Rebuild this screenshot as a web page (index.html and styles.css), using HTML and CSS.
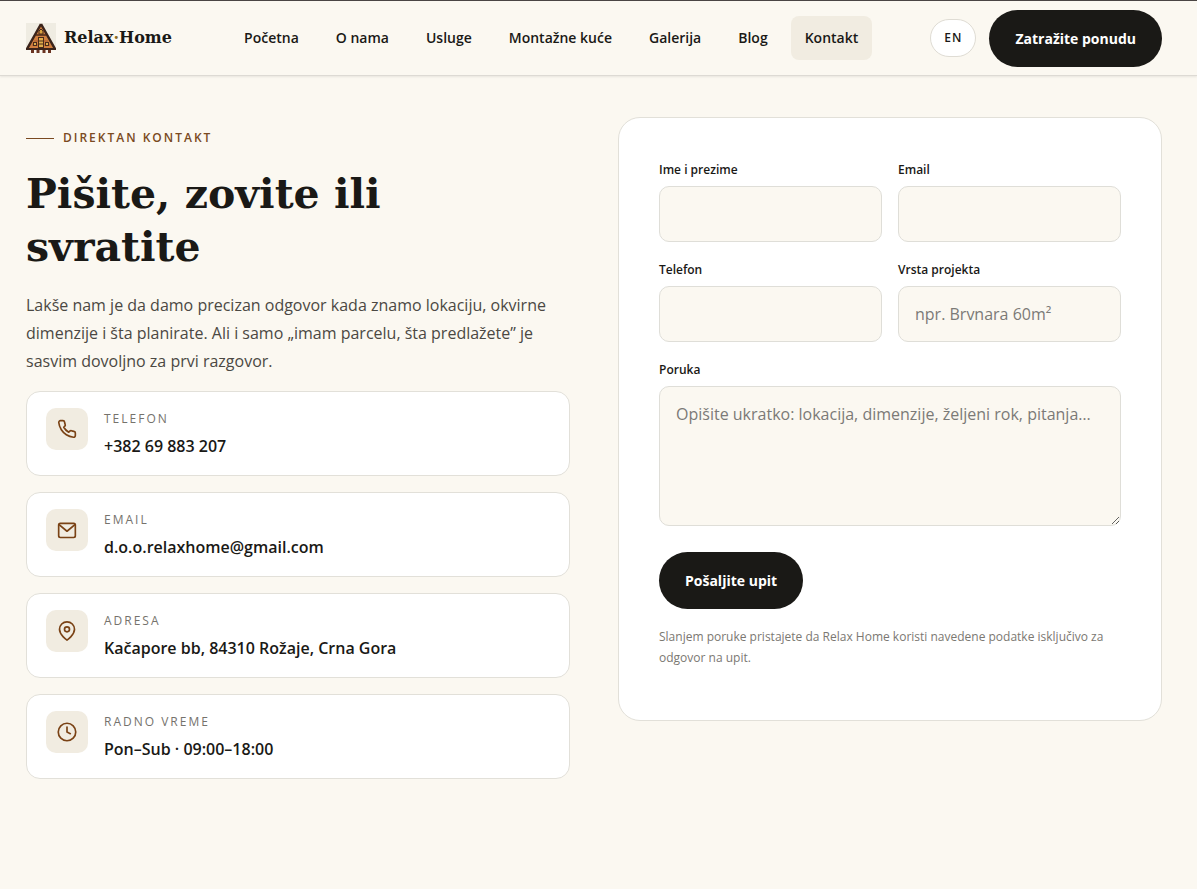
FILE: index.html
```html
<!DOCTYPE html>
<html lang="sr-Latn">
<head>
  <meta charset="UTF-8">
  <meta name="viewport" content="width=device-width, initial-scale=1">
  <title>Kontakt - Relax Home</title>
  <link rel="stylesheet" href="styles.css">
</head>
<body>
  <header class="site-header">
    <a class="brand" href="#">
      <svg class="brand-logo" viewBox="0 0 30 30" aria-hidden="true">
        <rect width="30" height="27" fill="#efece2"/>
        <path d="M15 1 L29 26 H1 Z" fill="#cf7f40"/>
        <path d="M6 22h18M8 18h14" stroke="#a85c2c" stroke-width="1"/>
        <path d="M15 1 L1 26 M15 1 L29 26" stroke="#3b241b" stroke-width="2.500"/>
        <path d="M10 12h10" stroke="#4a2a1a" stroke-width="1.500"/>
        <path d="M13 11V8l2-2 2 2v3z" fill="#d9a441" stroke="#4a2a1a"/>
        <rect x="12.500" y="14.500" width="5" height="10" fill="#e0ae4c" stroke="#4a2a1a"/>
        <path d="M12 18h6M12 21h6" stroke="#4a2a1a"/>
        <rect x="7.500" y="19.500" width="3" height="3" fill="#e0ae4c" stroke="#4a2a1a"/>
        <rect x="19.500" y="19.500" width="3" height="3" fill="#e0ae4c" stroke="#4a2a1a"/>
        <rect y="25" width="30" height="2" fill="#3b241b"/>
        <path d="M6.500 27v3M12 27v3M18 27v3M23.500 27v3" stroke="#6b3422" stroke-width="3"/>
      </svg>
      <span>Relax<span class="brand-dot">·</span>Home</span>
    </a>

    <nav class="nav">
      <a href="#">Početna</a>
      <a href="#">O nama</a>
      <a href="#">Usluge</a>
      <a href="#">Montažne kuće</a>
      <a href="#">Galerija</a>
      <a href="#">Blog</a>
      <a class="active" href="#">Kontakt</a>
    </nav>

    <div class="header-actions">
      <a class="lang" href="#">EN</a>
      <a class="btn" href="#">Zatražite ponudu</a>
    </div>
  </header>

  <main class="contact">
    <section class="contact-info">
      <p class="eyebrow">Direktan kontakt</p>
      <h1>Pišite, zovite ili svratite</h1>
      <p class="lead">Lakše nam je da damo precizan odgovor kada znamo lokaciju, okvirne dimenzije i šta planirate. Ali i samo „imam parcelu, šta predlažete” je sasvim dovoljno za prvi razgovor.</p>

      <div class="cards">
        <div class="card">
          <div class="card-icon">
            <svg viewBox="0 0 24 24"><path d="M22 16.920v3a2 2 0 0 1-2.180 2 19.790 19.790 0 0 1-8.630-3.070 19.500 19.500 0 0 1-6-6 19.790 19.790 0 0 1-3.070-8.670A2 2 0 0 1 4.110 2h3a2 2 0 0 1 2 1.720c.127.960.361 1.903.700 2.810a2 2 0 0 1-.450 2.110L8.090 9.910a16 16 0 0 0 6 6l1.270-1.270a2 2 0 0 1 2.110-.450c.907.339 1.850.573 2.810.700A2 2 0 0 1 22 16.920z"/></svg>
          </div>
          <div>
            <div class="card-label">Telefon</div>
            <a class="card-value" href="tel:+38269883207">+382 69 883 207</a>
          </div>
        </div>

        <div class="card">
          <div class="card-icon">
            <svg viewBox="0 0 24 24"><rect x="2" y="4" width="20" height="17" rx="2"/><path d="M2.500 5.500 12 13.500l9.500-8"/></svg>
          </div>
          <div>
            <div class="card-label">Email</div>
            <a class="card-value" href="mailto:d.o.o.relaxhome@gmail.com">d.o.o.relaxhome@gmail.com</a>
          </div>
        </div>

        <div class="card">
          <div class="card-icon">
            <svg viewBox="0 0 24 24"><path d="M21 10c0 7-9 13-9 13s-9-6-9-13a9 9 0 0 1 18 0z"/><circle cx="12" cy="10" r="3"/></svg>
          </div>
          <div>
            <div class="card-label">Adresa</div>
            <div class="card-value">Kačapore bb, 84310 Rožaje, Crna Gora</div>
          </div>
        </div>

        <div class="card">
          <div class="card-icon">
            <svg viewBox="0 0 24 24"><circle cx="12" cy="12" r="10.500"/><path d="M12 6v6l4 2"/></svg>
          </div>
          <div>
            <div class="card-label">Radno vreme</div>
            <div class="card-value">Pon–Sub · 09:00–18:00</div>
          </div>
        </div>
      </div>
    </section>

    <form class="contact-form">
      <div class="form-row">
        <div class="field">
          <label for="name">Ime i prezime</label>
          <input type="text" id="name" name="name">
        </div>
        <div class="field">
          <label for="email">Email</label>
          <input type="email" id="email" name="email">
        </div>
      </div>
      <div class="form-row">
        <div class="field">
          <label for="phone">Telefon</label>
          <input type="tel" id="phone" name="phone">
        </div>
        <div class="field">
          <label for="project">Vrsta projekta</label>
          <input type="text" id="project" name="project" placeholder="npr. Brvnara 60m²">
        </div>
      </div>
      <div class="field">
        <label for="message">Poruka</label>
        <textarea id="message" name="message" placeholder="Opišite ukratko: lokacija, dimenzije, željeni rok, pitanja…"></textarea>
      </div>
      <button class="btn" type="submit">Pošaljite upit</button>
      <p class="form-note">Slanjem poruke pristajete da Relax Home koristi navedene podatke isključivo za odgovor na upit.</p>
    </form>
  </main>
</body>
</html>
```
FILE: styles.css
```css
* {
  box-sizing: border-box;
}

body {
  margin: 0;
  font-family: 'Segoe UI', 'Open Sans', sans-serif;
  font-size: 16px;
  line-height: 28px;
  color: #1a1916;
  background: #fbf8f1;
}

a {
  color: inherit;
  text-decoration: none;
}

/* header */
.site-header {
  display: flex;
  align-items: center;
  justify-content: space-between;
  height: 76px;
  padding: 0 35px 0 26px;
  border-top: 1px solid #4a4544;
  border-bottom: 1px solid #dddad4;
  box-shadow: 0 1px 2px rgba(0, 0, 0, 0.08);
}

.brand {
  display: flex;
  align-items: center;
  gap: 8px;
  font-family: Georgia, 'DejaVu Serif', serif;
  font-size: 16px;
  font-weight: 700;
}

.brand-logo {
  width: 30px;
  height: 30px;
}

.brand-dot {
  color: #8a6a1c;
}

.nav {
  display: flex;
  gap: 9px;
}

.nav a {
  padding: 8px 14px;
  border-radius: 8px;
  font-size: 14px;
  font-weight: 600;
  white-space: nowrap;
}

.nav .active {
  background: #f1ece1;
}

.header-actions {
  display: flex;
  align-items: center;
  gap: 13px;
}

.lang {
  padding: 4px 13px;
  border: 1px solid #dfdcd4;
  border-radius: 999px;
  background: #fff;
  font-size: 12px;
  font-weight: 600;
  letter-spacing: 1px;
}

.btn {
  padding: 14px 26px;
  border: 0;
  border-radius: 999px;
  background: #1a1916;
  color: #fff;
  font-family: inherit;
  font-size: 14px;
  font-weight: 700;
  line-height: 29px;
  white-space: nowrap;
  cursor: pointer;
}

/* contact section */
.contact {
  display: grid;
  grid-template-columns: 1fr 1fr;
  align-items: start;
  gap: 48px;
  padding: 41px 35px 110px 26px;
}

.eyebrow {
  display: flex;
  align-items: center;
  gap: 9px;
  margin: 7px 0 16px;
  color: #7a4a21;
  font-size: 12px;
  font-weight: 600;
  letter-spacing: 2px;
  text-transform: uppercase;
}

.eyebrow::before {
  content: "";
  width: 28px;
  height: 1px;
  background: #7a4a21;
}

h1 {
  max-width: 440px;
  margin: 0 0 17px;
  font-family: Georgia, 'DejaVu Serif', serif;
  font-size: 41px;
  font-weight: 700;
  line-height: 53px;
}

.lead {
  margin: 0 0 16px;
  color: #4b4843;
}

.cards {
  display: flex;
  flex-direction: column;
  gap: 16px;
}

.card {
  display: flex;
  gap: 16px;
  padding: 16px 19px 15px;
  border: 1px solid #e2e0d9;
  border-radius: 14px;
  background: #fff;
}

.card-icon {
  display: flex;
  align-items: center;
  justify-content: center;
  width: 42px;
  height: 42px;
  border-radius: 10px;
  background: #f1ece1;
}

.card-icon svg {
  width: 20px;
  height: 20px;
  fill: none;
  stroke: #7a4215;
  stroke-width: 2;
  stroke-linecap: round;
  stroke-linejoin: round;
}

.card-label {
  color: #75726c;
  font-size: 12px;
  font-weight: 500;
  line-height: 21px;
  letter-spacing: 2px;
  text-transform: uppercase;
}

.card-value {
  display: block;
  margin-top: 3px;
  font-weight: 600;
}

/* form */
.contact-form {
  padding: 40px;
  border: 1px solid #e2e0d9;
  border-radius: 22px;
  background: #fff;
}

.form-row {
  display: grid;
  grid-template-columns: 1fr 1fr;
  gap: 16px;
  margin-bottom: 16px;
}

.field {
  display: flex;
  flex-direction: column;
  gap: 4px;
}

.field label {
  font-size: 12px;
  font-weight: 600;
  line-height: 24px;
}

.field input,
.field textarea {
  width: 100%;
  padding: 13px 16px;
  border: 1px solid #dfded8;
  border-radius: 10px;
  background: #fbf8f1;
  color: inherit;
  font-family: inherit;
  font-size: 16px;
  line-height: 28px;
}

.field input {
  height: 56px;
}

.field textarea {
  height: 140px;
  resize: vertical;
}

.field ::placeholder {
  color: #7b7a77;
}

.contact-form .btn {
  margin-top: 26px;
}

.form-note {
  margin: 17px 0 12px;
  color: #7b7872;
  font-size: 12px;
  line-height: 21px;
}
```
